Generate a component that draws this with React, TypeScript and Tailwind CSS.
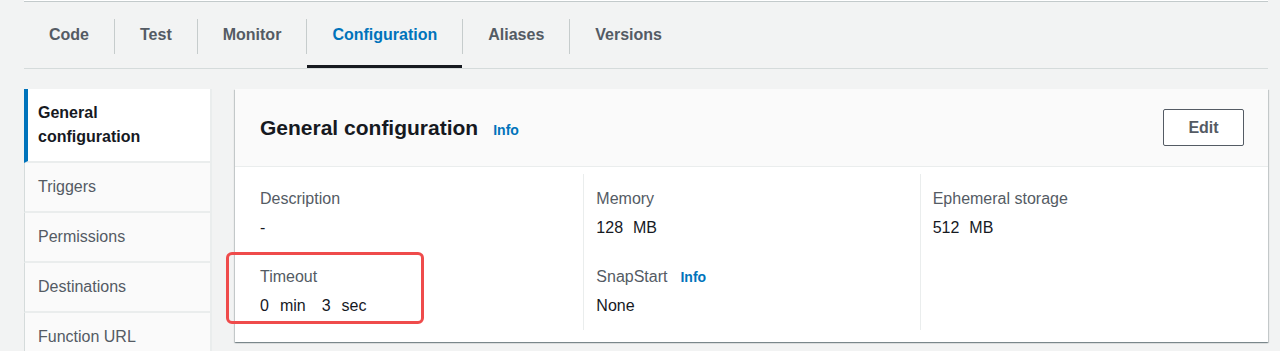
const tabs = ["Code", "Test", "Monitor", "Configuration", "Aliases", "Versions"];
const sideItems = ["Triggers", "Permissions", "Destinations", "Function URL"];

function Field({ label, value, info }: { label: string; value: React.ReactNode; info?: boolean }) {
  return (
    <div>
      <div className="flex items-baseline text-[16px] leading-[22px] text-[#545b64]">
        {label}
        {info && <span className="ml-[13px] text-[14px] font-bold text-[#0073bb]">Info</span>}
      </div>
      <div className="mt-[7px] text-[16px] leading-[22px] text-[#16191f]">{value}</div>
    </div>
  );
}

export default function App() {
  return (
    <div className="min-h-screen bg-[#f2f3f3] pl-6 pr-[12px] font-['Liberation_Sans',Arial,sans-serif]">
      {/* edge of the card above */}
      <div className="h-[1px] bg-white" />
      <div className="h-[1px] bg-[#c3cacb]" />

      {/* Tabs */}
      <div className="flex h-[67px] border-b border-[#d5dbdb]">
        {tabs.map((t, i) => (
          <div key={t} className="flex items-center">
            {i > 0 && <div className="mt-[2px] h-[35px] w-px bg-[#c6cccc]" />}
            <div
              className={`flex h-full items-center border-b-[3px] px-[25px] pt-[2px] text-[16px] font-bold ${
                t === "Configuration" ? "border-[#16191f] text-[#0073bb]" : "border-transparent text-[#545b64]"
              }`}
            >
              {t}
            </div>
          </div>
        ))}
      </div>

      <div className="mt-[20px] flex items-start gap-[23px]">
        {/* Side navigation */}
        <div className="w-[188px] shrink-0 border-r-2 border-[#eaeded] bg-[#fafafa]">
          <div className="border-b-2 border-l-4 border-b-[#eaeded] border-l-[#0073bb] bg-white py-3 pl-[10px] text-[16px] font-bold leading-6 text-[#16191f]">
            General
            <br />
            configuration
          </div>
          {sideItems.map((s) => (
            <div
              key={s}
              className="border-b-2 border-l border-b-[#eaeded] border-l-[#d5dbdb] py-3 pl-[13px] text-[16px] leading-6 text-[#545b64]"
            >
              {s}
            </div>
          ))}
        </div>

        {/* General configuration card */}
        <div className="flex-1 bg-white shadow-[0_1px_1px_0_rgba(0,28,36,0.3),1px_1px_1px_0_rgba(0,28,36,0.15),-1px_1px_1px_0_rgba(0,28,36,0.15)]">
          <div className="flex items-center justify-between border-b border-[#eaeded] bg-[#fafafa] py-5 pl-[25px] pr-6">
            <div className="flex items-baseline">
              <h2 className="text-[21px] font-bold text-[#16191f]">General configuration</h2>
              <span className="ml-[15px] text-[14px] font-bold text-[#0073bb]">Info</span>
            </div>
            <button className="h-[37px] w-[81px] rounded-[2px] border border-[#545b64] bg-white text-[16px] font-bold text-[#545b64]">
              Edit
            </button>
          </div>

          <div className="grid grid-cols-3 px-[12px] pb-[12px] pt-[7px]">
            <div className="pb-[13px] pl-[13px] pt-[14px]">
              <Field label="Description" value="-" />
              <div className="relative mt-[27px]">
                <div className="pointer-events-none absolute -left-[34px] -top-[14px] h-[72px] w-[198px] rounded-[6px] border-[3px] border-[#ef4b4b]" />
                <Field
                  label="Timeout"
                  value={
                    <span>
                      0<span className="ml-[11px]">min</span>
                      <span className="ml-[16px]">3</span>
                      <span className="ml-[11px]">sec</span>
                    </span>
                  }
                />
              </div>
            </div>
            <div className="border-l border-[#eaeded] pb-[13px] pl-[12px] pt-[14px]">
              <Field label="Memory" value={<span>128<span className="ml-[10px]">MB</span></span>} />
              <div className="mt-[27px]">
                <Field label="SnapStart" value="None" info />
              </div>
            </div>
            <div className="border-l border-[#eaeded] pb-[13px] pl-[12px] pt-[14px]">
              <Field label="Ephemeral storage" value={<span>512<span className="ml-[10px]">MB</span></span>} />
            </div>
          </div>
        </div>
      </div>
    </div>
  );
}
